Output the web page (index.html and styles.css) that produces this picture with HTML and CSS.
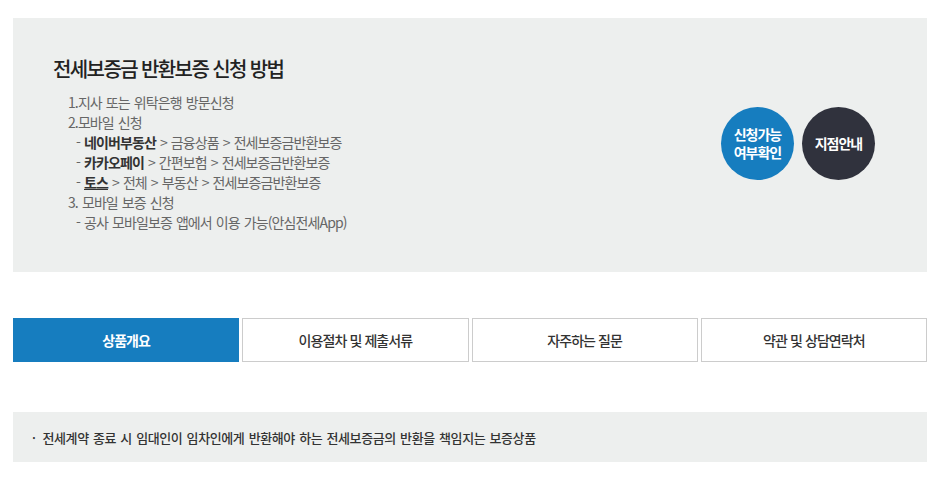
FILE: index.html
```html
<!DOCTYPE html>
<html lang="ko">
<head>
<meta charset="UTF-8">
<title>전세보증금 반환보증</title>
<link rel="stylesheet" href="styles.css">
</head>
<body>
	<div class="wrap">
		<!-- 신청 방법 안내 -->
		<div class="apply_box">
			<div class="apply_txt">
				<h3 class="tit">전세보증금 반환보증 신청 방법</h3>
				<ul class="step">
					<li>1.지사 또는 위탁은행 방문신청</li>
					<li>2.모바일 신청</li>
					<li class="sub">- <b>네이버부동산</b> &gt; 금융상품 &gt; 전세보증금반환보증</li>
					<li class="sub">- <b>카카오페이</b> &gt; 간편보험 &gt; 전세보증금반환보증</li>
					<li class="sub">- <b class="line">토스</b> &gt; 전체 &gt; 부동산 &gt; 전세보증금반환보증</li>
					<li>3. 모바일 보증 신청</li>
					<li class="sub">- 공사 모바일보증 앱에서 이용 가능(안심전세App)</li>
				</ul>
			</div>
			<div class="btn_circle">
				<a href="#" class="blue"><span>신청가능</span><span>여부확인</span></a>
				<a href="#" class="dark"><span>지점안내</span></a>
			</div>
		</div>

		<!-- 탭 -->
		<ul class="tab">
			<li class="on"><a href="#">상품개요</a></li>
			<li><a href="#">이용절차 및 제출서류</a></li>
			<li><a href="#">자주하는 질문</a></li>
			<li><a href="#">약관 및 상담연락처</a></li>
		</ul>

		<div class="info_box">
			<p><span class="dot">·</span>전세계약 종료 시 임대인이 임차인에게 반환해야 하는 전세보증금의 반환을 책임지는 보증상품</p>
		</div>
	</div>
</body>
</html>
```

FILE: styles.css
```css
body{
	margin: 0;
	font-family: "Noto Sans CJK KR", "Noto Sans", sans-serif;
	color: #333;
	background: #fff;
}
ul{
	margin: 0;
	padding: 0;
	list-style: none;
}
a{
	text-decoration: none;
	color: inherit;
}
.wrap{
	width: 914px;
	margin: 18px 0 0 13px;
}
.apply_box{
	display: flex;
	align-items: center;
	justify-content: space-between;
	background-color: #edefee;
	padding: 36px 52px 40px 40px;
}
.tit{
	margin: 0;
	font-size: 20px;
	line-height: 30px;
	font-weight: 500;
	color: #222;
	letter-spacing: -1.6px;
}
.step{
	margin: 8px 0 0 15px;
	font-size: 14px;
	line-height: 20px;
	color: #666;
	letter-spacing: -0.9px;
	word-spacing: 1px;
}
.step li.sub{
	padding-left: 8px;
}
.step b{
	color: #333;
	font-weight: 700;
}
.step b.line{
	text-decoration: underline;
}
.btn_circle{
	display: flex;
	gap: 8px;
}
.btn_circle a{
	display: flex;
	flex-direction: column;
	align-items: center;
	justify-content: center;
	width: 73px;
	height: 73px;
	border-radius: 50%;
	color: #fff;
	font-size: 14px;
	font-weight: 700;
	text-align: center;
	letter-spacing: -1px;
}
.btn_circle a span{
	display: block;
	line-height: 18px;
	height: 18px;
}
.btn_circle .blue{
	background-color: #167dbf;
}
.btn_circle .dark{
	background-color: #30323d;
}
.tab{
	display: grid;
	grid-template-columns: repeat(4, minmax(0, 1fr));
	gap: 3px;
	margin-top: 46px;
}
.tab li a{
	display: block;
	height: 42px;
	line-height: 42px;
	border: 1px solid #ccc;
	text-align: center;
	font-size: 14px;
	font-weight: 500;
	color: #333;
	letter-spacing: -0.9px;
}
.tab li.on a{
	background-color: #167dbf;
	border-color: #167dbf;
	color: #fff;
	font-weight: 700;
}
.info_box{
	margin-top: 50px;
	height: 50px;
	background-color: #edefee;
	display: flex;
	align-items: center;
	padding-left: 19px;
}
.info_box p{
	margin: 0;
	font-size: 13px;
	font-weight: 500;
	color: #333;
	letter-spacing: -0.4px;
	word-spacing: 1px;
}
.info_box .dot{
	margin-right: 7px;
}
```
